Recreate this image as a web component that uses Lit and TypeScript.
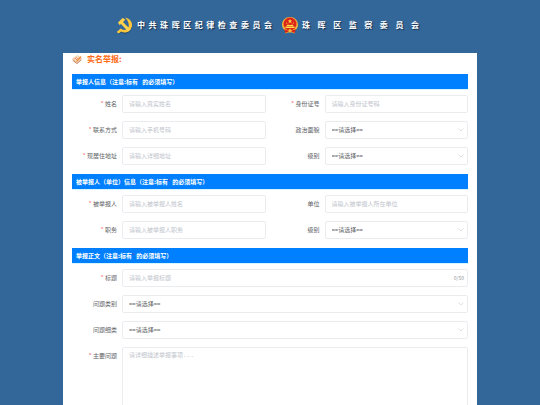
import { LitElement, html, css, svg, nothing } from "lit";
import { customElement, property } from "lit/decorators.js";

type Kind = "text" | "select" | "area";

interface Field {
  id: string;
  label: string;
  kind: Kind;
  required?: boolean;
  placeholder?: string;
  counter?: string;
  wide?: boolean;
}

interface Section {
  title: string;
  fields: Field[];
}

const SECTIONS: Section[] = [
  {
    title: "举报人信息",
    fields: [
      { id: "name", label: "姓名", kind: "text", required: true, placeholder: "请输入真实姓名" },
      { id: "idcard", label: "身份证号", kind: "text", required: true, placeholder: "请输入身份证号码" },
      { id: "phone", label: "联系方式", kind: "text", required: true, placeholder: "请输入手机号码" },
      { id: "politics", label: "政治面貌", kind: "select" },
      { id: "address", label: "现居住地址", kind: "text", required: true, placeholder: "请输入详细地址" },
      { id: "level", label: "级别", kind: "select" },
    ],
  },
  {
    title: "被举报人（单位）信息",
    fields: [
      { id: "target", label: "被举报人", kind: "text", required: true, placeholder: "请输入被举报人姓名" },
      { id: "unit", label: "单位", kind: "text", placeholder: "请输入被举报人所在单位" },
      { id: "post", label: "职务", kind: "text", required: true, placeholder: "请输入被举报人职务" },
      { id: "target-level", label: "级别", kind: "select" },
    ],
  },
  {
    title: "举报正文",
    fields: [
      { id: "title", label: "标题", kind: "text", required: true, placeholder: "请输入举报标题", counter: "0/50", wide: true },
      { id: "category", label: "问题类别", kind: "select", wide: true },
      { id: "subcategory", label: "问题细类", kind: "select", wide: true },
      { id: "detail", label: "主要问题", kind: "area", required: true, placeholder: "请详细描述举报事项...", wide: true },
    ],
  },
];

const partyEmblem = svg`
  <svg class="emblem" viewBox="0 0 32 34" aria-hidden="true">
    <path d="M18 3c10 3 15 13 11 21-4 9-14 12-21 7l-3 3H3l2-5 5-3c6 4 13 2 15-4 2-7-1-13-7-19z" fill="#1d3f63" fill-opacity=".6"/>
    <path d="M16 1c11 2 17 12 13 20-3 9-13 13-21 8l-3 3c-1 1-5 0-5-2 0-1 1-2 3-3l4-4c6 5 13 3 16-3 2-6-1-13-7-19z" fill="#fcc63a"/>
    <path d="M2 11 11 2l6 3-5 5 15 15-5 4L8 14l-3 2z" fill="#fdd24a"/>
  </svg>`;

const nationalEmblem = svg`
  <svg class="emblem" viewBox="0 0 32 34" aria-hidden="true">
    <path d="M16 0c9 0 16 7 16 15 0 6-3 10-7 13l1 5-6-2h-8l-6 2 1-5c-4-3-7-7-7-13C0 7 7 0 16 0z" fill="#f2b53b"/>
    <circle cx="16" cy="14" r="13" fill="#de2417"/>
    <path d="m16 4 1.200 2.800 3 .2-2.300 2 .8 3-2.700-1.600L13.300 12l.8-3-2.300-2 3-.2z" fill="#ffdf4a"/>
    <g fill="#ffdf4a">
      <circle cx="9" cy="12" r="1"/><circle cx="12" cy="14" r="1"/>
      <circle cx="20" cy="14" r="1"/><circle cx="23" cy="12" r="1"/>
      <path d="M10 16h12l1 2H9zM7 19h18v3H7z"/>
    </g>
    <path d="M4 24c4 2 8 3 12 3s8-1 12-3l-3 8-6-3h-6l-6 3z" fill="#d92217"/>
    <circle cx="16" cy="27" r="3" fill="#f5c33b"/>
  </svg>`;

const formIcon = svg`
  <svg class="form-icon" viewBox="0 0 20 18" aria-hidden="true">
    <path d="M1 8 11 1l8 6-9 8z" fill="#fbe3c6" stroke="#dba878"/>
    <path d="m1 9 9 7 9-8v2l-9 8-8-6z" fill="#c27a50"/>
    <path d="m5 8 4-3M8 10l5-4" stroke="#d9572c" stroke-width="1.500"/>
    <path d="m9 12 8-10 2 2-8 9-3 1z" fill="#ee8a3a"/>
  </svg>`;

const chevron = svg`
  <svg class="chevron" viewBox="0 0 6 6" aria-hidden="true">
    <path d="m.5 1.500 2.500 2.500 2.500-2.500" fill="none" stroke="#c8cbd2" stroke-width=".6"/>
  </svg>`;

@customElement("report-field")
class ReportField extends LitElement {
  @property({ attribute: false }) field!: Field;

  static styles = css`
    :host {
      display: grid;
      grid-template-columns: 45px minmax(0, 1fr);
      column-gap: 5px;
      align-items: start;
    }
    .label {
      font-size: 6px;
      line-height: 18px;
      text-align: right;
      white-space: nowrap;
      color: #606266;
    }
    .star {
      color: #f56c6c;
    }
    .box {
      position: relative;
      display: flex;
    }
    .control {
      box-sizing: border-box;
      width: 100%;
      height: 18px;
      margin: 0;
      padding: 0 6px;
      border: 1px solid #eaecf0;
      border-radius: 2px;
      background: #fff;
      color: #606266;
      font-family: inherit;
      font-size: 6px;
      line-height: 16px;
      outline: none;
      appearance: none;
    }
    .text {
      padding-bottom: 1px;
    }
    .control::placeholder {
      color: #c0c4cc;
      opacity: 1;
    }
    .control:focus {
      border-color: #409eff;
    }
    .area {
      height: 80px;
      padding: 2px 6px;
      line-height: 9px;
      font-family: "DejaVu Sans Mono", "Noto Sans CJK SC", monospace;
      resize: none;
    }
    .chevron {
      position: absolute;
      right: 4px;
      top: 6px;
      width: 6px;
      height: 6px;
      pointer-events: none;
    }
    .counter {
      position: absolute;
      right: 4px;
      top: 1px;
      font-size: 5px;
      line-height: 16px;
      color: #909399;
    }
  `;

  private control() {
    const f = this.field;
    if (f.kind === "select") {
      return html`<select class="control" id=${f.id}><option>==请选择==</option></select>${chevron}`;
    }
    if (f.kind === "area") {
      return html`<textarea class="control area" id=${f.id} placeholder=${f.placeholder ?? ""}></textarea>`;
    }
    return html`<input class="control text" id=${f.id} type="text" placeholder=${f.placeholder ?? ""} />`;
  }

  render() {
    const f = this.field;
    return html`
      <label class="label" for=${f.id}>${f.required ? html`<span class="star">* </span>` : nothing}${f.label}</label>
      <div class="box">
        ${this.control()}
        ${f.counter ? html`<span class="counter">${f.counter}</span>` : nothing}
      </div>
    `;
  }
}

@customElement("app-root")
class AppRoot extends LitElement {
  static styles = css`
    :host {
      display: block;
      box-sizing: border-box;
      min-height: 100vh;
      padding: 0 63px;
      background: #336699;
      font-family: "Noto Sans CJK SC", "Noto Sans", sans-serif;
    }
    .banner {
      display: flex;
      justify-content: center;
      align-items: center;
      gap: 10px;
      height: 50px;
      padding: 0 4px 0 0;
      margin-bottom: 3px;
    }
    .org {
      display: flex;
      align-items: center;
      gap: 4px;
    }
    .emblem {
      width: 16px;
      height: 17px;
    }
    .org-name {
      margin: 0;
      width: 135px;
      font-size: 8px;
      line-height: 12px;
      font-weight: 700;
      color: #fff;
      text-align: justify;
      text-align-last: justify;
      text-shadow: 1px 1px 1px #16304c;
    }
    .short {
      width: 117px;
    }
    .panel {
      padding: 0 9px 12px;
      background: #fff;
    }
    .heading {
      display: flex;
      align-items: center;
      gap: 5px;
      height: 12px;
      margin-bottom: 9px;
    }
    .form-icon {
      width: 10px;
      height: 9px;
    }
    .heading-text {
      margin: 0;
      font-size: 8px;
      line-height: 12px;
      font-weight: 700;
      color: #ff6a13;
    }
    .section {
      margin-bottom: 9px;
    }
    .bar {
      margin: 0 0 5px;
      padding: 0 4px;
      border-bottom: 1px solid #d5f6ff;
      background: #0080ff;
      background-clip: padding-box;
      color: #fff;
      font-size: 6px;
      line-height: 15px;
      font-weight: 700;
    }
    .mark {
      font-weight: 400;
      color: #8040a0;
    }
    .fields {
      display: grid;
      grid-template-columns: repeat(2, minmax(0, 1fr));
      gap: 8px 9px;
    }
    .wide {
      grid-column: 1 / -1;
    }
  `;

  render() {
    return html`
      <header class="banner">
        <div class="org">${partyEmblem}<p class="org-name">中共珠晖区纪律检查委员会</p></div>
        <div class="org">${nationalEmblem}<p class="org-name short">珠晖区监察委员会</p></div>
      </header>
      <main class="panel">
        <div class="heading">${formIcon}<h1 class="heading-text">实名举报:</h1></div>
        <form>
          ${SECTIONS.map(
            (s) => html`
              <section class="section">
                <h2 class="bar">${s.title}（注意:标有<span class="mark">*</span> 的必须填写）</h2>
                <div class="fields">
                  ${s.fields.map(
                    (f) => html`<report-field class=${f.wide ? "wide" : ""} .field=${f}></report-field>`
                  )}
                </div>
              </section>
            `
          )}
        </form>
      </main>
    `;
  }
}
